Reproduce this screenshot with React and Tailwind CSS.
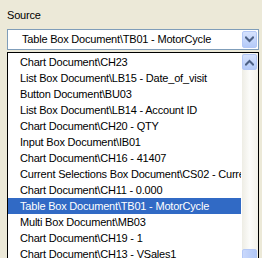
const items = [
  'Chart Document\\CH23',
  'List Box Document\\LB15 - Date_of_visit',
  'Button Document\\BU03',
  'List Box Document\\LB14 - Account ID',
  'Chart Document\\CH20 - QTY',
  'Input Box Document\\IB01',
  'Chart Document\\CH16 - 41407',
  'Current Selections Box Document\\CS02 - Current Selections',
  'Chart Document\\CH11 - 0.000',
  'Table Box Document\\TB01 - MotorCycle',
  'Multi Box Document\\MB03',
  'Chart Document\\CH19 - 1',
  'Chart Document\\CH13 - VSales1',
  'Chart Document\\CH14',
];

const Chevron = ({ up }) => (
  <svg width="9" height="7" viewBox="0 0 9 7" className={up ? 'rotate-180' : ''}>
    <path d="M1 1.5 L4.5 5 L8 1.5" fill="none" stroke="#4D6185" strokeWidth="2" strokeLinecap="square" />
  </svg>
);

const App = () => {
  return (
    <div className="w-[262px] h-[258px] overflow-hidden bg-[#ECE9D8] font-['Liberation_Sans',Arial,sans-serif] text-[11px] tracking-[-0.2px] text-black">
      <div className="pt-[9px] pl-[7px] leading-[13px]">Source</div>

      <div className="mt-[7px] ml-[7px] w-[252px] h-[21px] border border-[#7F9DB9] bg-white flex items-center">
        <span className="flex-1 pl-[14px] leading-[19px] whitespace-nowrap overflow-hidden">
          Table Box Document\TB01 - MotorCycle
        </span>
        <div className="mr-[1px] w-[15px] h-[17px] rounded-[2px] border border-[#B4C8F6] bg-gradient-to-b from-[#D6E2FD] to-[#B4CAF8] flex items-center justify-center">
          <Chevron />
        </div>
      </div>

      <div className="mt-[2px] ml-[7px] w-[252px] h-[260px] border border-black bg-white flex">
        <div className="flex-1 pt-[1px] pr-[1px] overflow-hidden">
          {items.map((t) => {
            const sel = t.startsWith('Table Box');
            return (
              <div
                key={t}
                className={
                  'h-[16px] leading-[16px] pl-[12px] whitespace-nowrap overflow-hidden ' +
                  (sel ? 'bg-[#316AC5] text-white' : '')
                }
              >
                {t}
              </div>
            );
          })}
        </div>
        <div className="w-[16px] flex flex-col bg-gradient-to-r from-[#EEEDE5] via-[#FCFCFA] to-[#F2F1EA]">
          <div className="mt-[1px] w-[15px] h-[16px] rounded-[2px] border border-[#B4C8F6] bg-gradient-to-b from-[#D6E2FD] to-[#B4CAF8] flex items-center justify-center">
            <Chevron up />
          </div>
          <div className="h-[179px]" />
          <div className="w-[15px] h-[40px] rounded-[2px] border border-[#B4C8F6] bg-gradient-to-r from-[#C9D8FC] to-[#B2C8F7]" />
        </div>
      </div>
    </div>
  );
};

export default App;
